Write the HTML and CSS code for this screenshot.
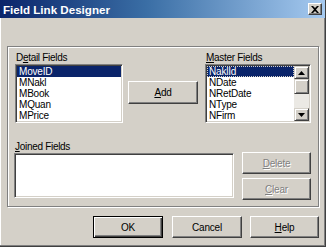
FILE: index.html
```html
<!DOCTYPE html>
<html lang="en">
<head>
    <meta charset="UTF-8">
    <meta name="viewport" content="width=device-width, initial-scale=1.0">
    <title>Field Link Designer</title>
    <link rel="stylesheet" href="styles.css">
</head>
<body>
    <div class="window">
        <div class="titlebar">
            <span class="title">Field Link Designer</span>
            <span class="close">
                <svg width="8" height="7" viewBox="0 0 8 7">
                    <path d="M0 0h2l2 2 2-2h2L5 3.5 8 7H6L4 5 2 7H0l3-3.5z" fill="#000"/>
                </svg>
            </span>
        </div>
        <div class="content">
            <div class="group">
                <div class="row-top">
                    <div class="field detail">
                        <div class="label">D<u>e</u>tail Fields</div>
                        <div class="listbox list-detail">
                            <div class="item selected">MoveID</div>
                            <div class="item">MNakl</div>
                            <div class="item">MBook</div>
                            <div class="item">MQuan</div>
                            <div class="item">MPrice</div>
                        </div>
                    </div>
                    <button class="btn add"><u>A</u>dd</button>
                    <div class="field master">
                        <div class="label"><u>M</u>aster Fields</div>
                        <div class="listbox list-master">
                            <div class="items">
                                <div class="item selected focus">NaklId</div>
                                <div class="item">NDate</div>
                                <div class="item">NRetDate</div>
                                <div class="item">NType</div>
                                <div class="item">NFirm</div>
                            </div>
                            <div class="scrollbar">
                                <div class="sb-btn">
                                    <svg width="7" height="4" viewBox="0 0 7 4"><path d="M3.5 0L7 4H0z" fill="#000"/></svg>
                                </div>
                                <div class="sb-thumb"></div>
                                <div class="sb-track"></div>
                                <div class="sb-btn">
                                    <svg width="7" height="4" viewBox="0 0 7 4"><path d="M0 0h7L3.5 4z" fill="#000"/></svg>
                                </div>
                            </div>
                        </div>
                    </div>
                </div>
                <div class="row-bottom">
                    <div class="field joined">
                        <div class="label"><u>J</u>oined Fields</div>
                        <div class="listbox list-joined"></div>
                    </div>
                    <div class="side-buttons">
                        <button class="btn side" disabled><u>D</u>elete</button>
                        <button class="btn side" disabled><u>C</u>lear</button>
                    </div>
                </div>
            </div>
            <div class="footer">
                <button class="btn default">OK</button>
                <button class="btn cancel">Cancel</button>
                <button class="btn help"><u>H</u>elp</button>
            </div>
        </div>
    </div>
</body>
</html>
```
FILE: styles.css
```css
body {
    margin: 0;
    font-family: "Liberation Sans", Arial, sans-serif;
    font-size: 10px;
    background: #d4d0c8;
}
.window {
    width: 326px;
    height: 247px;
    box-sizing: border-box;
    background: #d4d0c8;
    border-right: 1px solid #404040;
    border-bottom: 1px solid #404040;
    box-shadow: inset -1px -1px 0 #808080, inset 1px 0 0 #ffffff;
}
.titlebar {
    height: 18px;
    display: flex;
    align-items: center;
    justify-content: space-between;
    background: linear-gradient(to right, #0a246a, #3a6ea5 45%, #a6caf0);
    padding: 0 3px 0 3px;
}
.title {
    color: #ffffff;
    font-weight: bold;
    font-size: 11.6px;
    padding-top: 1px;
}
.close {
    width: 12px;
    height: 10px;
    display: flex;
    align-items: center;
    justify-content: center;
    background: #d4d0c8;
    border: 1px solid;
    border-color: #ffffff #404040 #404040 #ffffff;
    box-shadow: inset -1px -1px 0 #808080;
}
.content {
    padding: 28px 6px 0 7px;
}
.group {
    height: 161px;
    box-sizing: border-box;
    border: 1px solid #808080;
    box-shadow: 1px 1px 0 #ffffff, inset 1px 1px 0 #ffffff;
    padding: 4px 7px 0 7px;
}
.row-top {
    display: flex;
    align-items: flex-start;
}
.label {
    height: 13px;
    line-height: 13px;
    padding-left: 1px;
    letter-spacing: -0.3px;
    color: #000000;
}
.listbox {
    box-sizing: border-box;
    background: #ffffff;
    border: 1px solid;
    border-color: #808080 #ffffff #ffffff #808080;
    box-shadow: inset 1px 1px 0 #404040, inset -1px -1px 0 #d4d0c8;
    padding: 1px;
}
.detail {
    width: 108px;
}
.list-detail {
    height: 59px;
}
.item {
    height: 11px;
    line-height: 11px;
    padding-left: 2px;
    letter-spacing: -0.2px;
    white-space: nowrap;
}
.item.selected {
    background: #0a246a;
    color: #ffffff;
}
.item.focus {
    outline: 1px dotted #d4d0c8;
    outline-offset: -1px;
}
.btn {
    font-family: "Liberation Sans", Arial, sans-serif;
    font-size: 10px;
    letter-spacing: -0.2px;
    color: #000000;
    background: #d4d0c8;
    border: 1px solid;
    border-color: #ffffff #404040 #404040 #ffffff;
    box-shadow: inset -1px -1px 0 #808080;
    padding: 0;
    height: 22px;
    box-sizing: border-box;
}
.btn:disabled {
    color: #808080;
    text-shadow: 1px 1px 0 #ffffff;
}
.add {
    width: 70px;
    height: 23px;
    margin: 30px 0 0 5px;
}
.master {
    width: 106px;
    margin-left: 7px;
}
.list-master {
    height: 59px;
    display: flex;
}
.items {
    flex: 1;
}
.scrollbar {
    width: 15px;
    display: flex;
    flex-direction: column;
}
.sb-btn {
    height: 13px;
    box-sizing: border-box;
    display: flex;
    align-items: center;
    justify-content: center;
    background: #d4d0c8;
    border: 1px solid;
    border-color: #d4d0c8 #404040 #404040 #d4d0c8;
    box-shadow: inset 1px 1px 0 #ffffff, inset -1px -1px 0 #808080;
}
.sb-thumb {
    height: 15px;
    box-sizing: border-box;
    background: #d4d0c8;
    border: 1px solid;
    border-color: #d4d0c8 #404040 #404040 #d4d0c8;
    box-shadow: inset 1px 1px 0 #ffffff, inset -1px -1px 0 #808080;
}
.sb-track {
    flex: 1;
    background: #ebe9e4;
}
.row-bottom {
    display: flex;
    align-items: flex-start;
    margin-top: 17px;
}
.joined {
    margin-left: -1px;
    width: 220px;
}
.list-joined {
    height: 45px;
}
.side-buttons {
    display: flex;
    flex-direction: column;
    gap: 4px;
    margin: 12px 0 0 8px;
}
.side {
    width: 69px;
}
.footer {
    display: flex;
    justify-content: flex-end;
    margin-top: 9px;
}
.default {
    width: 70px;
    border: 1px solid #000000;
    box-shadow: inset 1px 1px 0 #ffffff, inset -1px -1px 0 #404040, inset -2px -2px 0 #808080;
}
.cancel {
    width: 70px;
    margin-left: 9px;
}
.help {
    width: 69px;
    margin-left: 8px;
}
```
